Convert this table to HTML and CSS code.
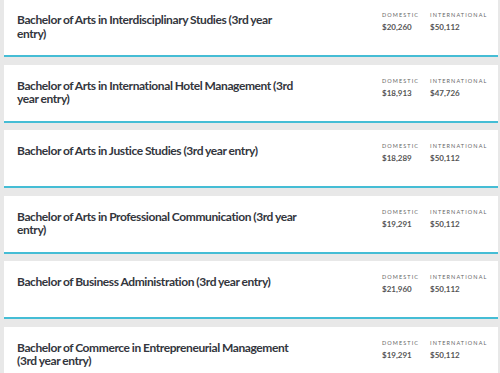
FILE: index.html
```html
<!DOCTYPE html>
<html>
<head>
<meta charset="utf-8">
<link rel="stylesheet" href="styles.css">
</head>
<body>
<div class="list">
  <div class="card">
    <h3 class="title">Bachelor of Arts in Interdisciplinary Studies (3rd year entry)</h3>
    <div class="fees">
      <div class="fee"><span class="label">Domestic</span><span class="amount">$20,260</span></div>
      <div class="fee"><span class="label">International</span><span class="amount">$50,112</span></div>
    </div>
  </div>
  <div class="card">
    <h3 class="title">Bachelor of Arts in International Hotel Management (3rd year entry)</h3>
    <div class="fees">
      <div class="fee"><span class="label">Domestic</span><span class="amount">$18,913</span></div>
      <div class="fee"><span class="label">International</span><span class="amount">$47,726</span></div>
    </div>
  </div>
  <div class="card">
    <h3 class="title">Bachelor of Arts in Justice Studies (3rd year entry)</h3>
    <div class="fees">
      <div class="fee"><span class="label">Domestic</span><span class="amount">$18,289</span></div>
      <div class="fee"><span class="label">International</span><span class="amount">$50,112</span></div>
    </div>
  </div>
  <div class="card">
    <h3 class="title">Bachelor of Arts in Professional Communication (3rd year entry)</h3>
    <div class="fees">
      <div class="fee"><span class="label">Domestic</span><span class="amount">$19,291</span></div>
      <div class="fee"><span class="label">International</span><span class="amount">$50,112</span></div>
    </div>
  </div>
  <div class="card">
    <h3 class="title">Bachelor of Business Administration (3rd year entry)</h3>
    <div class="fees">
      <div class="fee"><span class="label">Domestic</span><span class="amount">$21,960</span></div>
      <div class="fee"><span class="label">International</span><span class="amount">$50,112</span></div>
    </div>
  </div>
  <div class="card">
    <h3 class="title">Bachelor of Commerce in Entrepreneurial Management (3rd year entry)</h3>
    <div class="fees">
      <div class="fee"><span class="label">Domestic</span><span class="amount">$19,291</span></div>
      <div class="fee"><span class="label">International</span><span class="amount">$50,112</span></div>
    </div>
  </div>
</div>
</body>
</html>
```
FILE: styles.css
```css
html, body {
  margin: 0;
  padding: 0;
  background: #e8e8e8;
}
body {
  font-family: Lato, "Open Sans", sans-serif;
  overflow: hidden;
}
.list {
  margin-top: -1px;
  padding: 0 2px 0 4px;
  display: flex;
  flex-direction: column;
  gap: 7.5px;
}
.card {
  background: #ffffff;
  height: 56px;
  border-bottom: 2px solid #45bdd5;
  display: flex;
  justify-content: space-between;
  align-items: flex-start;
  padding: 0 13px 0 13px;
}
.title {
  margin: 14px 0 0 0;
  width: 284px;
  font-size: 12px;
  letter-spacing: -0.4px;
  word-spacing: -0.3px;
  line-height: 13.5px;
  font-weight: 700;
  color: #33363d;
}
.fees {
  display: flex;
  margin-top: 13px;
  margin-right: 7px;
}
.fee {
  display: flex;
  flex-direction: column;
  width: 48px;
}
.label {
  font-size: 5.5px;
  letter-spacing: 1.1px;
  text-transform: uppercase;
  color: #666;
  line-height: 7px;
}
.amount {
  margin-top: 3px;
  font-size: 8px;
  font-weight: 700;
  color: #555;
  line-height: 10px;
}
```
